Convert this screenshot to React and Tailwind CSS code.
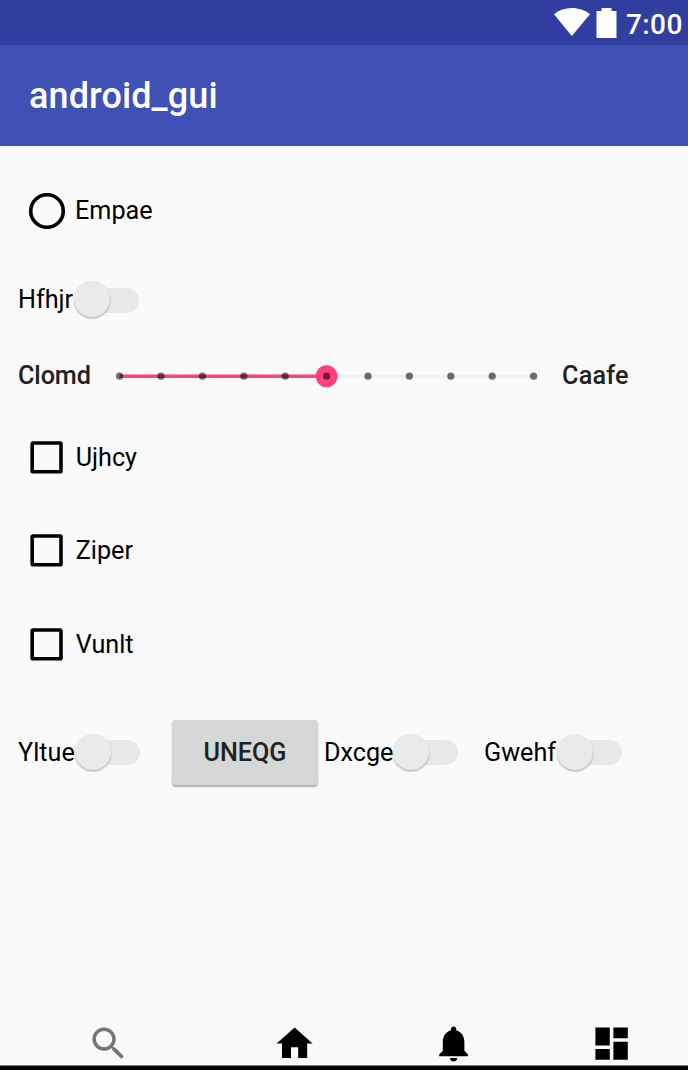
function Switch({ label, className }) {
  return (
    <label className={`flex items-center ${className}`}>
      <span className="grow whitespace-nowrap">{label}</span>
      <span className="relative flex h-9 w-[65px] shrink-0 items-center">
        <span className="ml-[7px] h-[25px] w-[58px] rounded-full bg-[#e8e8e8]" />
        <span className="absolute -top-px left-0 size-9 rounded-full bg-[#eaeaea] shadow-[0_1.5px_2px_rgba(0,0,0,0.28)]" />
      </span>
    </label>
  );
}

function CheckRow({ label }) {
  return (
    <label className="flex h-[93.6px] items-center">
      <svg viewBox="0 0 24 24" className="mr-[7.5px] size-[43.2px]">
        <rect x="4" y="3.9" width="16" height="16" rx="0.5" fill="none" stroke="#000" strokeWidth="2" strokeLinejoin="round" />
      </svg>
      <span className="pt-px">{label}</span>
    </label>
  );
}

function Slider() {
  return (
    <svg viewBox="0 0 436 24" className="h-6 w-[436px] shrink-0">
      <path d="M10.6 12.2H425" stroke="#f1f1f1" strokeWidth="3.6" />
      <path d="M10.6 12.2H217.6" stroke="#ff4081" strokeWidth="3.6" />
      <circle cx="217.6" cy="12.2" r="10.9" fill="#ff4081" />
      {Array.from({ length: 11 }, (_, i) => (
        <circle key={i} cx={10.6 + i * 41.4} cy="12.2" r="3.6" fill="#000" fillOpacity="0.56" />
      ))}
    </svg>
  );
}

function NavIcon({ d, className }) {
  return (
    <svg viewBox="0 0 24 24" className={`size-[43.2px] shrink-0 ${className}`} fill="currentColor">
      <path d={d} />
    </svg>
  );
}

export default function App() {
  return (
    <div className="flex h-[1070px] w-[688px] flex-col overflow-hidden bg-[#fafafa] font-[Roboto,sans-serif] text-[25.2px] leading-[30px] text-black">
      <header className="flex h-[45px] shrink-0 items-start bg-[#303f9f] pl-[553px] text-white">
        <svg viewBox="0 0 38 30" className="mt-[7px] h-[30px] w-[38px] shrink-0" fill="currentColor">
          <path d="M1 7.3C6 3.2 12 1 18.8 1S32 3.2 37 7.3L18.8 29Z" />
        </svg>
        <svg viewBox="0 0 21 30" className="mt-2 ml-[5px] h-[30px] w-[21px] shrink-0" fill="currentColor">
          <path d="M5.5 0H15.5V3H20.5V30H.5V3H5.5Z" />
        </svg>
        <span className="mt-[10px] ml-[9px] text-[28px] font-medium tracking-[0.4px]">7:00</span>
      </header>
      <div className="flex h-[101px] shrink-0 items-center bg-[#3f51b5] pl-[29px] text-white">
        <h1 className="text-[36px] leading-[42px] font-medium tracking-[0.1px]">android_gui</h1>
      </div>
      <main className="flex grow flex-col">
        <label className="mt-[43px] flex h-11 items-center pl-[25px]">
          <svg viewBox="0 0 44 44" className="mr-[6px] size-11">
            <circle cx="22" cy="22" r="16.3" fill="none" stroke="#000" strokeWidth="3.6" />
          </svg>
          <span>Empae</span>
        </label>
        <Switch label="Hfhjr" className="mt-[49px] ml-[18px] w-[120.7px]" />
        <div className="mt-[46px] flex h-6 items-center pl-[18px] font-medium text-[#212121]">
          <span className="w-[91px] tracking-[-0.1px]">Clomd</span>
          <Slider />
          <span className="ml-[17px] tracking-[0.2px]">Caafe</span>
        </div>
        <div className="mt-[22.5px] pl-[25px]">
          <CheckRow label="Ujhcy" />
          <CheckRow label="Ziper" />
          <CheckRow label="Vunlt" />
        </div>
        <div className="mt-[28.5px] flex h-[66px] items-center pl-[18px]">
          <Switch label="Yltue" className="w-[122.3px]" />
          <button className="ml-[31.7px] h-[65px] w-[146px] rounded-[4px] bg-[#d6d7d7] font-medium text-[#212121] shadow-[0_1.5px_1.5px_rgba(0,0,0,0.3)]">UNEQG</button>
          <Switch label="Dxcge" className="ml-[6px] w-[134px]" />
          <Switch label="Gwehf" className="ml-[26px] w-[138px]" />
        </div>
      </main>
      <nav className="flex h-[43px] shrink-0 items-start pl-[87px]">
        <NavIcon className="text-[#757575]" d="M15.5 14h-.79l-.28-.27C15.41 12.59 16 11.11 16 9.5 16 5.91 13.09 3 9.5 3S3 5.91 3 9.5 5.91 16 9.5 16c1.61 0 3.09-.59 4.23-1.57l.27.28v.79l5 4.99L20.49 19l-4.99-5zm-6 0C7.01 14 5 11.99 5 9.5S7.01 5 9.5 5 14 7.01 14 9.5 11.99 14 9.5 14z" />
        <NavIcon className="ml-[143px]" d="M10 20v-6h4v6h5v-8h3L12 3 2 12h3v8z" />
        <NavIcon className="ml-[115.2px]" d="M12 22c1.1 0 2-.9 2-2h-4c0 1.1.89 2 2 2zm6-6v-5c0-3.07-1.64-5.64-4.5-6.32V4c0-.83-.67-1.5-1.5-1.5s-1.5.67-1.5 1.5v.68C7.63 5.36 6 7.92 6 11v5l-2 2v1h16v-1l-2-2z" />
        <NavIcon className="ml-[115.2px]" d="M3 13h8V3H3v10zm0 8h8v-6H3v6zm10 0h8V11h-8v10zm0-18v6h8V3h-8z" />
      </nav>
      <div className="h-[5px] shrink-0 border-t border-[#7d7d7d] bg-black" />
    </div>
  );
}
